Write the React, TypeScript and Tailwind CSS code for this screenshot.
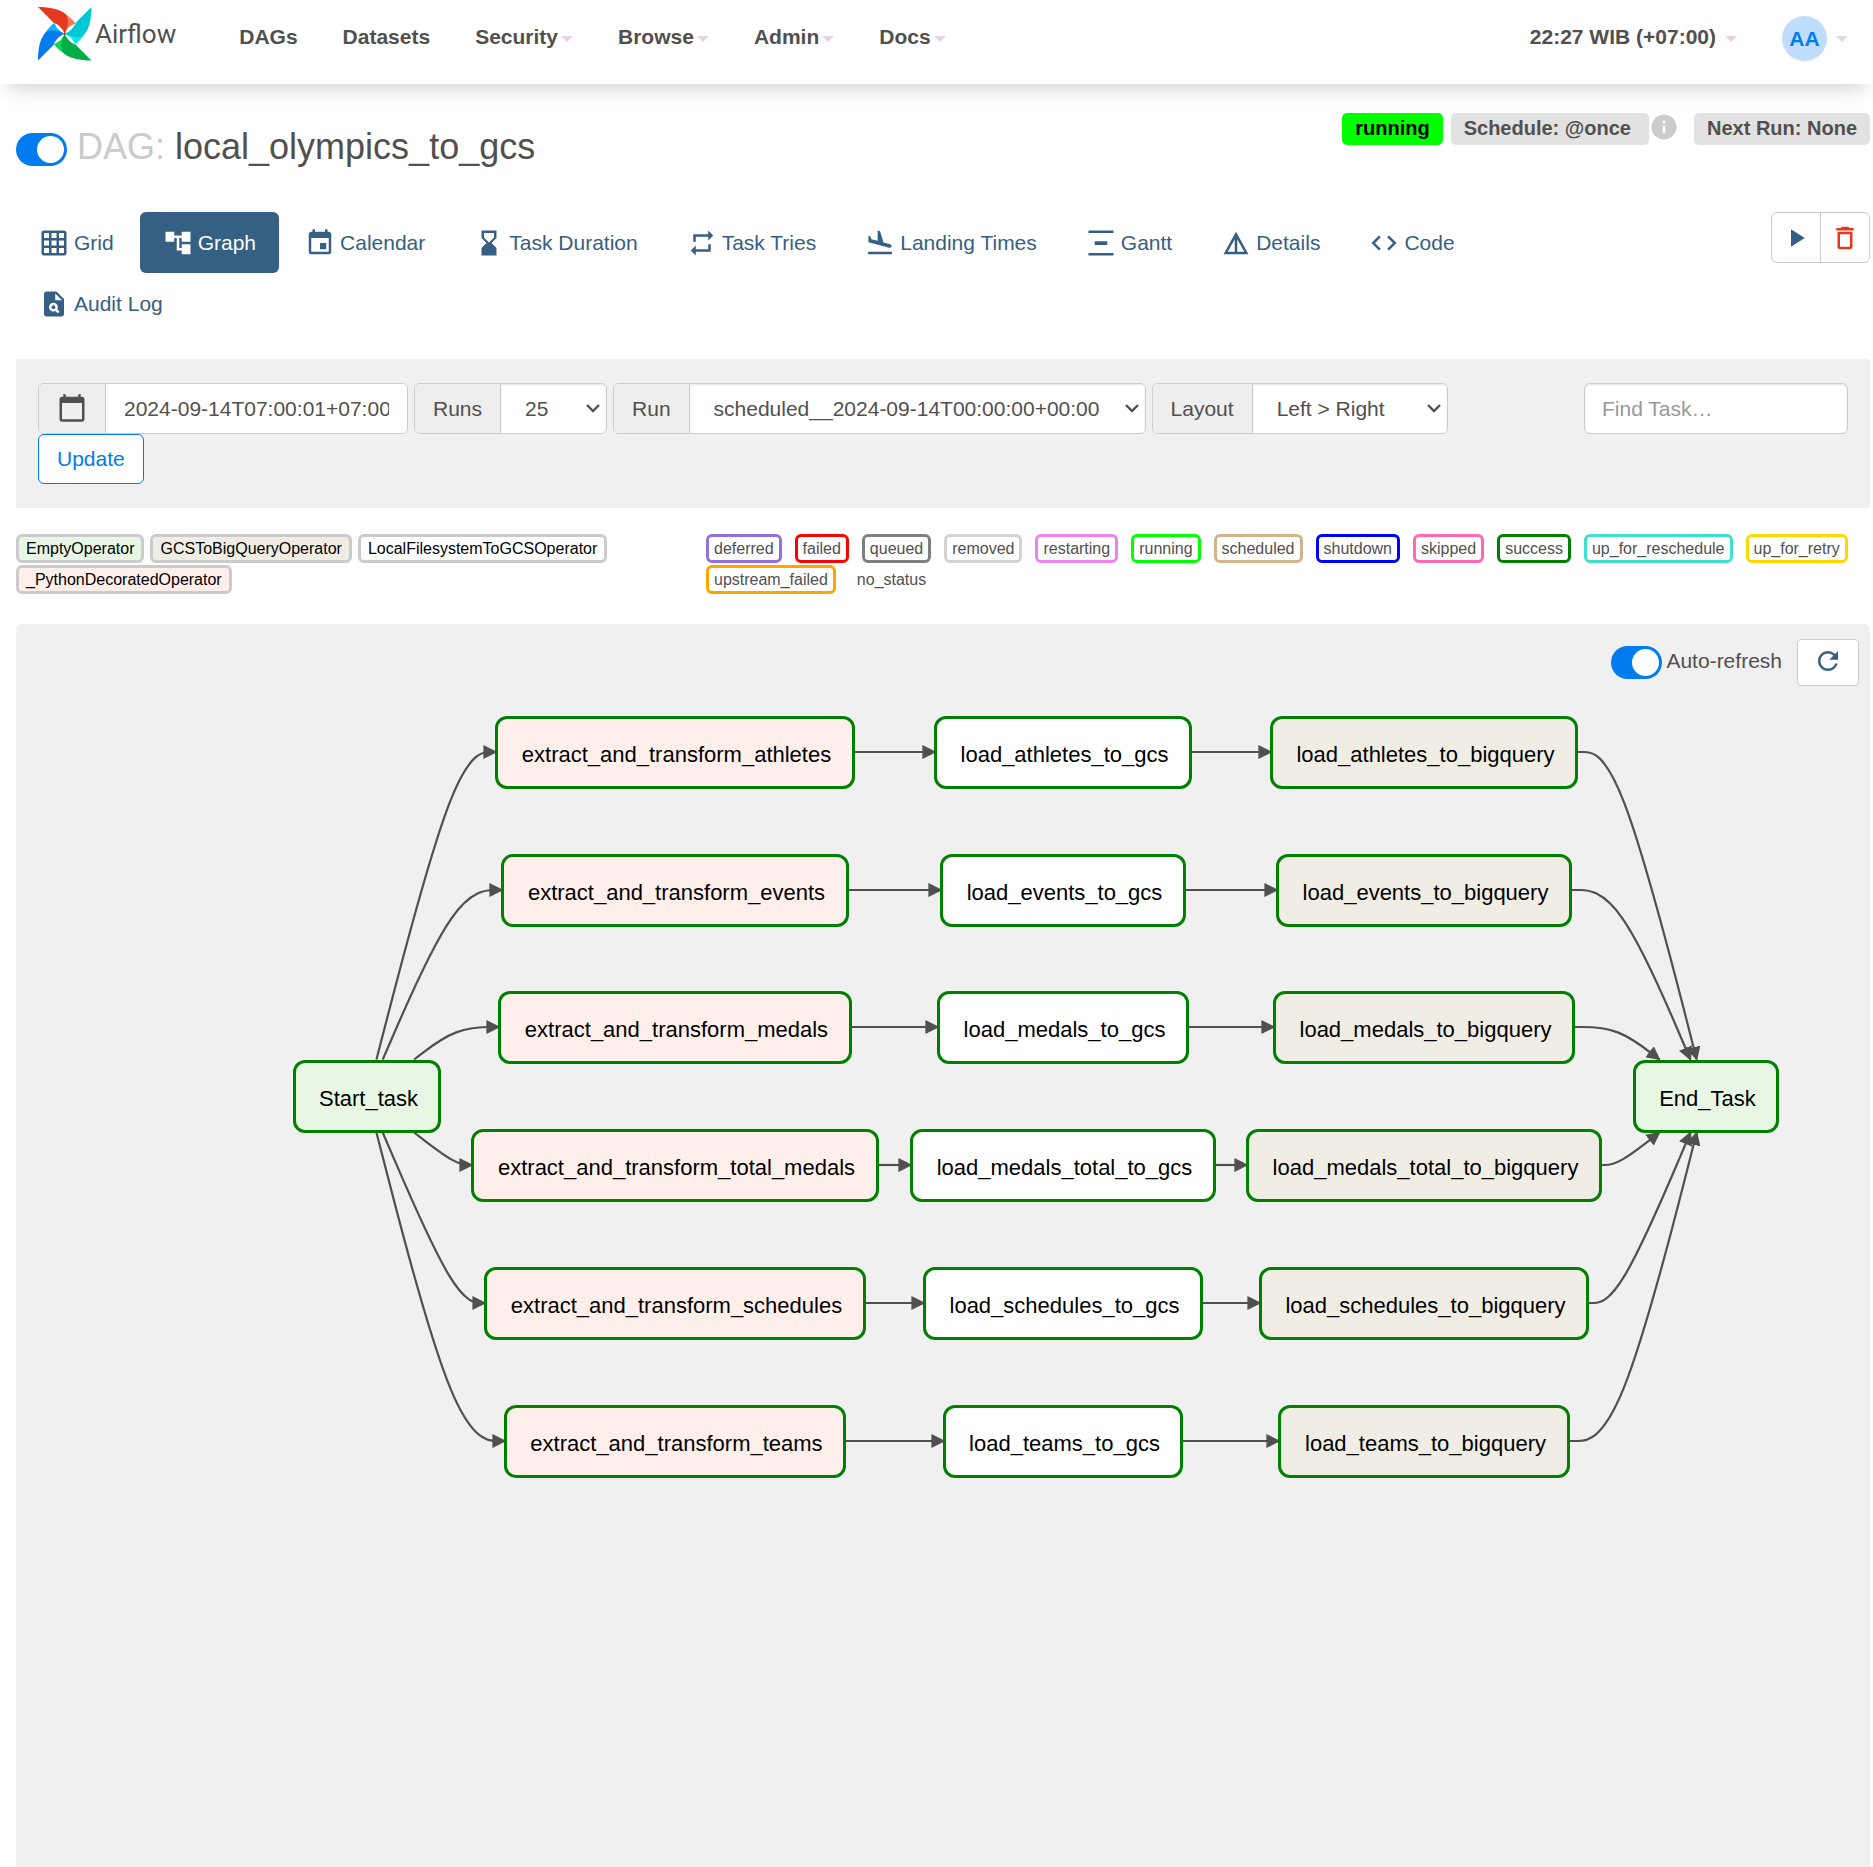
import React, { useState } from "react";
import {
  MdAccountTree,
  MdCalendarToday,
  MdCode,
  MdDeleteOutline,
  MdDetails,
  MdEvent,
  MdFlightLand,
  MdGridOn,
  MdHourglassBottom,
  MdInfo,
  MdPlagiarism,
  MdPlayArrow,
  MdRefresh,
  MdRepeat,
  MdVerticalDistribute,
} from "react-icons/md";
import type { IconType } from "react-icons";

function Caret() {
  return (
    <span
      aria-hidden="true"
      className="mt-1 h-0 w-0 border-x-[6px] border-t-[6px] border-x-transparent border-t-[#e5d3e5]"
    />
  );
}

const BLADES = [
  { turn: "rotate(0 26.7 26.7)", face: "#e43921", fold: "#ff7557" },
  { turn: "rotate(90 26.7 26.7)", face: "#00c7d4", fold: "#11e1ee" },
  { turn: "rotate(180 26.7 26.7)", face: "#00ad46", fold: "#04d659" },
  { turn: "rotate(270 26.7 26.7)", face: "#017cee", fold: "#11b5ff" },
];

function Logo() {
  return (
    <a href="#home" className="flex items-center" aria-label="Airflow home">
      <svg viewBox="0 0 54 54" className="h-[54px] w-[54px]" aria-hidden="true">
        {BLADES.map((b) => (
          <g key={b.turn} transform={b.turn}>
            <path d="M28 7.5C33 11 36 14 37.3 16.5C33 18 29 21 26.7 26.7Z" fill={b.fold} />
            <path d="M0 0C12 0 22 2 28 7.5C31.5 13.500 29.500 21 26.700 26.700C25 22 20 17 15.700 15.700Z" fill={b.face} />
          </g>
        ))}
        <circle cx="26.7" cy="26.7" r="1" fill="#51504f" />
      </svg>
      <span className="ml-[3px] font-[Roboto] text-[26px] leading-none">Airflow</span>
    </a>
  );
}

const NAV = [
  { label: "DAGs", menu: false },
  { label: "Datasets", menu: false },
  { label: "Security", menu: true },
  { label: "Browse", menu: true },
  { label: "Admin", menu: true },
  { label: "Docs", menu: true },
];

function Header() {
  return (
    <header className="relative flex h-[84px] shrink-0 items-start justify-between bg-white pl-[38px] pr-[25px] font-bold shadow-[0_12px_20px_-8px_rgba(0,0,0,0.19)]">
      <div className="flex h-[68px] items-center font-normal">
        <Logo />
      </div>
      <nav className="ml-[63px] flex h-[74px] flex-1 items-center gap-[45px]">
        {NAV.map((n) =>
          n.menu ? (
            <button key={n.label} type="button" className="flex items-center gap-[3px]">
              {n.label}
              <Caret />
            </button>
          ) : (
            <a key={n.label} href={`#${n.label}`}>
              {n.label}
            </a>
          ),
        )}
      </nav>
      <div className="flex h-[74px] items-center gap-[45px]">
        <button type="button" className="flex items-center gap-[9px]">
          22:27 WIB (+07:00)
          <Caret />
        </button>
        <button type="button" className="flex items-center gap-[9px]" aria-label="User menu">
          <span className="mt-[3px] flex h-[45px] w-[45px] items-center justify-center rounded-full bg-[#c0ddfb] text-[#017cee]">
            AA
          </span>
          <Caret />
        </button>
      </div>
    </header>
  );
}

function Toggle({ label, children }: { label: string; children?: React.ReactNode }) {
  const [on, setOn] = useState(true);
  return (
    <label className="flex items-center gap-1">
      <input
        type="checkbox"
        role="switch"
        aria-label={label}
        checked={on}
        onChange={() => setOn(!on)}
        className="peer sr-only"
      />
      <span className="flex h-[33px] w-[51px] shrink-0 items-center rounded-full bg-[#cbcbcb] p-[3px] peer-checked:justify-end peer-checked:bg-[#017cee]">
        <span className="h-[27px] w-[27px] rounded-full bg-white" />
      </span>
      {children}
    </label>
  );
}

function TitleRow() {
  return (
    <div className="flex items-start justify-between">
      <div className="mt-4 flex items-end gap-[10px]">
        <Toggle label="Pause or unpause DAG" />
        <h1 className="pb-[1px] text-[36px] leading-[36px]">
          <span className="text-[#cbcbcb]">DAG:</span> local_olympics_to_gcs
        </h1>
      </div>
      <div className="flex items-center text-[20px] font-bold leading-[30px]">
        <span className="rounded-[5px] bg-[#00ff00] px-[13px] pb-[2px] text-black">running</span>
        <span className="ml-2 rounded-[5px] bg-[#e2e2e2] pb-[2px] pl-[13px] pr-[18px]">Schedule: @once</span>
        <MdInfo className="-mt-1 h-[30px] w-[30px] text-[#cbcbcb]" />
        <span className="ml-[15px] rounded-[5px] bg-[#e2e2e2] px-[13px] pb-[2px]">Next Run: None</span>
      </div>
    </div>
  );
}

const TABS: { label: string; icon: IconType }[] = [
  { label: "Grid", icon: MdGridOn },
  { label: "Graph", icon: MdAccountTree },
  { label: "Calendar", icon: MdEvent },
  { label: "Task Duration", icon: MdHourglassBottom },
  { label: "Task Tries", icon: MdRepeat },
  { label: "Landing Times", icon: MdFlightLand },
  { label: "Gantt", icon: MdVerticalDistribute },
  { label: "Details", icon: MdDetails },
  { label: "Code", icon: MdCode },
  { label: "Audit Log", icon: MdPlagiarism },
];

function Tabs() {
  return (
    <div className="mt-[46px] flex items-start justify-between text-[#355f83]">
      <nav className="flex w-10/12 flex-wrap gap-x-[3px]">
        {TABS.map(({ label, icon: Icon }) => (
          <a
            key={label}
            href={`#${label}`}
            className={
              label === "Graph"
                ? "flex h-[61px] items-center gap-[5px] rounded-md bg-[#355f83] px-[23px] text-white"
                : "flex h-[61px] items-center gap-[5px] rounded-md px-[23px]"
            }
          >
            <Icon className="h-[30px] w-[30px]" />
            {label}
          </a>
        ))}
      </nav>
      <div className="flex h-[51px] w-[99px] rounded-md border border-[#cbcbcb]">
        <button
          type="button"
          aria-label="Trigger DAG"
          className="flex flex-1 items-center justify-center border-r border-[#cbcbcb]"
        >
          <MdPlayArrow className="h-[30px] w-[30px]" />
        </button>
        <button
          type="button"
          aria-label="Delete DAG"
          className="flex flex-1 items-center justify-center text-[#e43921]"
        >
          <MdDeleteOutline className="h-[30px] w-[30px]" />
        </button>
      </div>
    </div>
  );
}

function SelectField({
  id,
  label,
  options,
  width,
}: {
  id: string;
  label: string;
  options: string[];
  width: string;
}) {
  return (
    <div className="flex h-[51px] overflow-hidden rounded-md border border-[#cbcbcb] bg-white">
      <label htmlFor={id} className="flex items-center border-r border-[#cbcbcb] bg-[#eee] px-[18px]">
        {label}
      </label>
      <div className="relative flex">
        <select
          id={id}
          className={`${width} appearance-none bg-white pl-6 pr-8 shadow-[inset_0_1px_2px_rgba(0,0,0,0.1)]`}
        >
          {options.map((o) => (
            <option key={o}>{o}</option>
          ))}
        </select>
        <svg
          viewBox="0 0 14 9"
          className="pointer-events-none absolute right-[6px] top-5 h-[9px] w-[14px]"
          aria-hidden="true"
        >
          <path d="M1 1 L7 7 L13 1" fill="none" stroke="#51504f" strokeWidth="2.4" />
        </svg>
      </div>
    </div>
  );
}

function Filters() {
  return (
    <form
      className="mt-[25px] flex items-start justify-between bg-[#f0f0f0] px-[22px] py-6"
      onSubmit={(e) => e.preventDefault()}
    >
      <div className="flex flex-wrap gap-x-[6px]">
        <div className="flex h-[51px] overflow-hidden rounded-md border border-[#cbcbcb] bg-white">
          <label
            htmlFor="base-date"
            aria-label="Base date"
            className="flex w-[67px] items-center justify-center border-r border-[#cbcbcb] bg-[#eee]"
          >
            <MdCalendarToday className="-mt-[2px] h-[30px] w-[30px]" />
          </label>
          <input
            id="base-date"
            type="text"
            defaultValue="2024-09-14T07:00:01+07:00"
            className="w-[301px] border-x-[18px] border-white bg-white"
          />
        </div>
        <SelectField id="runs" label="Runs" options={["25", "5", "50", "100", "365"]} width="w-[105px]" />
        <SelectField
          id="run"
          label="Run"
          options={["scheduled__2024-09-14T00:00:00+00:00"]}
          width="w-[455px]"
        />
        <SelectField
          id="layout"
          label="Layout"
          options={["Left > Right", "Right > Left", "Top > Bottom", "Bottom > Top"]}
          width="w-[194px]"
        />
        <div className="w-full">
          <button
            type="submit"
            className="h-[50px] rounded-md border border-[#017cee] bg-white px-[18px] text-[#017cee]"
          >
            Update
          </button>
        </div>
      </div>
      <input
        type="search"
        aria-label="Find Task"
        placeholder="Find Task…"
        className="h-[51px] w-[264px] rounded-md border border-[#cbcbcb] bg-white px-[17px] shadow-[inset_0_1px_2px_rgba(0,0,0,0.1)] placeholder:text-[#999]"
      />
    </form>
  );
}

const OPERATORS = [
  { name: "EmptyOperator", cls: "bg-[#e8f7e4]" },
  { name: "GCSToBigQueryOperator", cls: "bg-[#f0eee4]" },
  { name: "LocalFilesystemToGCSOperator", cls: "bg-white" },
  { name: "_PythonDecoratedOperator", cls: "bg-[#ffefeb]" },
];

const STATES = [
  { name: "deferred", cls: "border-[#9370db]" },
  { name: "failed", cls: "border-[#ff0000]" },
  { name: "queued", cls: "border-[#808080]" },
  { name: "removed", cls: "border-[#d3d3d3]" },
  { name: "restarting", cls: "border-[#ee82ee]" },
  { name: "running", cls: "border-[#00ff00]" },
  { name: "scheduled", cls: "border-[#d2b48c]" },
  { name: "shutdown", cls: "border-[#0000ff]" },
  { name: "skipped", cls: "border-[#ff69b4]" },
  { name: "success", cls: "border-[#008000]" },
  { name: "up_for_reschedule", cls: "border-[#40e0d0]" },
  { name: "up_for_retry", cls: "border-[#ffd700]" },
  { name: "upstream_failed", cls: "border-[#ffa500]" },
  { name: "no_status", cls: "border-transparent" },
];

function Legend() {
  return (
    <div className="mt-[26px] flex items-start text-[16px] leading-[23px]">
      <div className="flex w-4/12 flex-wrap gap-x-[6px] gap-y-[2px] text-black">
        {OPERATORS.map((o) => (
          <span key={o.name} className={`rounded-md border-[3px] border-[#cbcbcb] px-[7px] ${o.cls}`}>
            {o.name}
          </span>
        ))}
      </div>
      <div className="flex flex-1 flex-wrap gap-x-[13px] gap-y-[2px] pl-[72px]">
        {STATES.map((s) => (
          <button key={s.name} type="button" className={`rounded-md border-[3px] px-[5px] ${s.cls}`}>
            {s.name}
          </button>
        ))}
      </div>
    </div>
  );
}

/* Graph geometry, in pixels from the canvas corner. */
const NODE_H = 73;
const ROW_Y = [128, 266, 403, 541, 679, 817];
const MID_Y = 472;

type Node = { id: string; cx: number; cy: number; w: number; cls: string };

const node = (id: string, cx: number, cy: number, w: number, cls: string): Node => ({ id, cx, cy, w, cls });

const START = node("Start_task", 351, MID_Y, 148, "bg-[#e8f7e4]");
const END = node("End_Task", 1690, MID_Y, 146, "bg-[#e8f7e4]");

const PIPELINES: [string, number, string, number, string, number][] = [
  ["extract_and_transform_athletes", 360, "load_athletes_to_gcs", 258, "load_athletes_to_bigquery", 308],
  ["extract_and_transform_events", 348, "load_events_to_gcs", 246, "load_events_to_bigquery", 296],
  ["extract_and_transform_medals", 354, "load_medals_to_gcs", 252, "load_medals_to_bigquery", 302],
  ["extract_and_transform_total_medals", 408, "load_medals_total_to_gcs", 306, "load_medals_total_to_bigquery", 356],
  ["extract_and_transform_schedules", 382, "load_schedules_to_gcs", 280, "load_schedules_to_bigquery", 330],
  ["extract_and_transform_teams", 342, "load_teams_to_gcs", 240, "load_teams_to_bigquery", 292],
];

const ROWS = PIPELINES.map(([a, aw, b, bw, c, cw], i) => [
  node(a, 659, ROW_Y[i], aw, "bg-[#ffefeb]"),
  node(b, 1047, ROW_Y[i], bw, "bg-white"),
  node(c, 1408, ROW_Y[i], cw, "bg-[#f0eee4]"),
]);

type Pt = [number, number];

/* B-spline through three control points. */
function basis(a: Pt, b: Pt, c: Pt) {
  const mix = (p: Pt, q: Pt, t: number) =>
    `${(p[0] + (q[0] - p[0]) * t).toFixed(1)} ${(p[1] + (q[1] - p[1]) * t).toFixed(1)}`;
  const knot = `${((a[0] + 4 * b[0] + c[0]) / 6).toFixed(1)} ${((a[1] + 4 * b[1] + c[1]) / 6).toFixed(1)}`;
  return (
    `M${a[0]} ${a[1]} L${mix(a, b, 1 / 6)} C${mix(a, b, 1 / 3)} ${mix(a, b, 2 / 3)} ${knot} ` +
    `C${mix(b, c, 1 / 3)} ${mix(b, c, 2 / 3)} ${mix(b, c, 5 / 6)} L${c[0]} ${c[1]}`
  );
}

/* Point where the ray from a node's centre to p leaves its top or bottom side. */
function exit(n: Node, p: Pt): Pt {
  const dy = p[1] < n.cy ? -NODE_H / 2 : NODE_H / 2;
  return [n.cx + ((p[0] - n.cx) * dy) / (p[1] - n.cy), n.cy + dy];
}

const EDGES = ROWS.flatMap(([a, b, c]) => {
  const y = a.cy;
  const first: Pt = [440, y];
  const last: Pt = [1602, y];
  return [
    basis(exit(START, first), first, [a.cx - a.w / 2 + 1, y]),
    `M${a.cx + a.w / 2} ${y} L${b.cx - b.w / 2 + 1} ${y}`,
    `M${b.cx + b.w / 2} ${y} L${c.cx - c.w / 2 + 1} ${y}`,
    basis([c.cx + c.w / 2, y], last, exit(END, last)),
  ];
});

const NODES = [START, END, ...ROWS.flat()];

function Graph() {
  return (
    <section className="relative mt-[30px] min-h-[880px] flex-1 rounded-t-md bg-[#f0f0f0]">
      <div className="flex items-start justify-end gap-[15px] pr-[11px] pt-[15px]">
        <div className="pt-[7px]">
          <Toggle label="Auto-refresh">
            <span className="-mt-1">Auto-refresh</span>
          </Toggle>
        </div>
        <button
          type="button"
          aria-label="Refresh"
          className="flex h-[47px] w-[62px] items-center justify-center rounded border border-[#cbcbcb] bg-white text-[#355f83]"
        >
          <MdRefresh className="-mt-1 h-[30px] w-[30px]" />
        </button>
      </div>
      <svg width="1780" height="880" className="pointer-events-none absolute left-0 top-0" aria-hidden="true">
        <defs>
          <marker
            id="arrow"
            viewBox="0 0 10 10"
            refX="9"
            refY="5"
            markerUnits="userSpaceOnUse"
            markerWidth="14"
            markerHeight="14"
            orient="auto"
          >
            <path d="M0 0 L10 5 L0 10 Z" fill="#51504f" />
          </marker>
        </defs>
        {EDGES.map((d) => (
          <path key={d} d={d} fill="none" stroke="#51504f" strokeWidth="2.2" markerEnd="url(#arrow)" />
        ))}
      </svg>
      {NODES.map((n) => (
        <button
          key={n.id}
          type="button"
          className={`absolute flex h-[73px] items-center justify-center whitespace-nowrap rounded-xl border-[3px] border-[#008000] pl-[3px] pt-[6px] text-[22px] text-black ${n.cls}`}
          style={{ left: n.cx - n.w / 2, top: n.cy - NODE_H / 2, width: n.w }}
        >
          {n.id}
        </button>
      ))}
    </section>
  );
}

export default function App() {
  return (
    <div className="flex min-h-screen flex-col bg-white font-['Liberation_Sans',Arial,sans-serif] text-[21px] leading-[30px] text-[#51504f]">
      <Header />
      <main className="flex flex-1 flex-col pl-4 pr-[3px] pt-[29px]">
        <TitleRow />
        <Tabs />
        <Filters />
        <Legend />
        <Graph />
      </main>
    </div>
  );
}
